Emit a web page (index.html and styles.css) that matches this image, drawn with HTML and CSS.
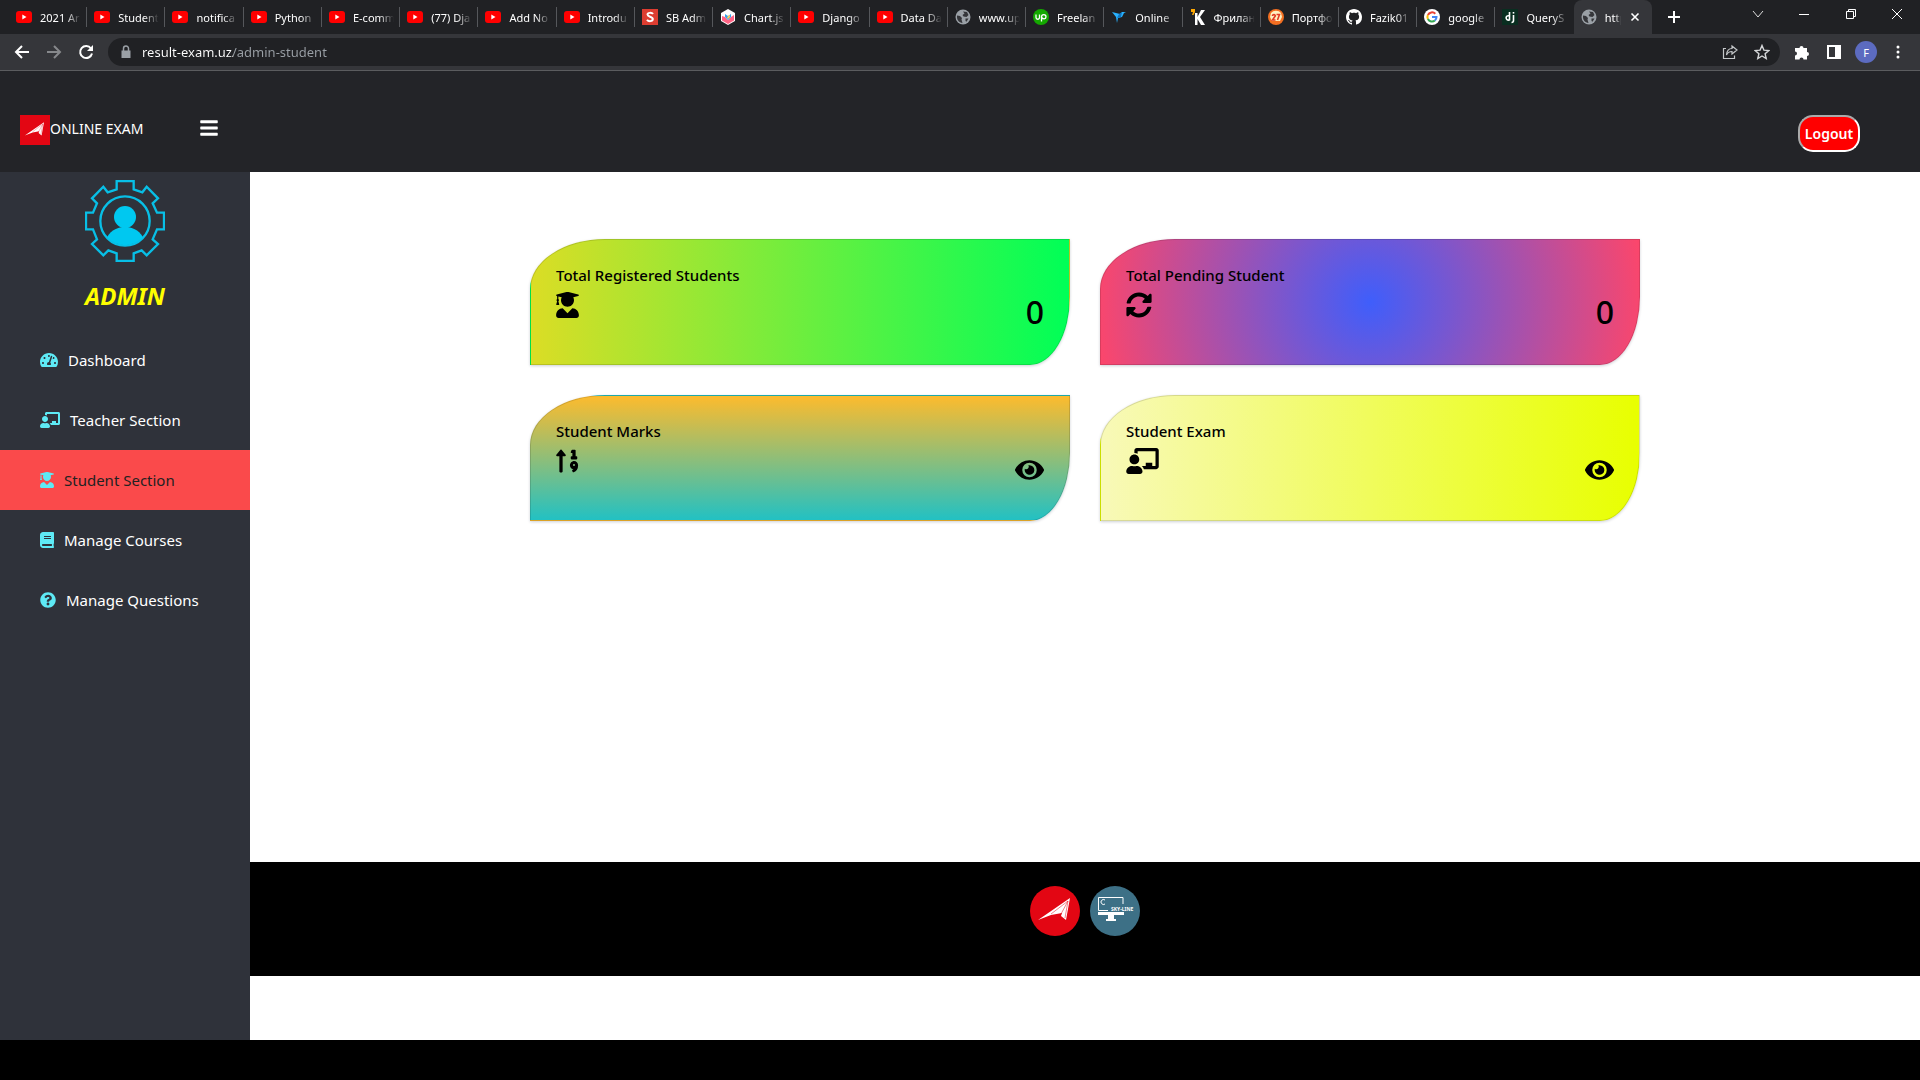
FILE: index.html
```html
<!DOCTYPE html>
<html lang="en">
<head>
<meta charset="utf-8">
<title>Online Exam</title>
<link rel="stylesheet" href="styles.css">
</head>
<body>
<svg class="defs" aria-hidden="true">
  <symbol id="youtube" viewBox="0 0 16 16"><rect y="2" width="16" height="12" rx="3" fill="#f00"/><path d="M6.300 5.500v5L10.500 8z" fill="#fff"/></symbol>
  <symbol id="globe" viewBox="0 0 16 16"><circle cx="8" cy="8" r="7.500" fill="#9aa0a6"/><path d="M2 6.500l3 .5 2 2-.5 1.500 1 3.500C4 13.500 2 11 2 8zM8 2.500l4 .5 1.500 3-2 2-3-.5-1-1.500 2-1.500zM10.500 9.500l3 0-2 3.300-1-.8z" fill="#35363a"/></symbol>
  <symbol id="plane" viewBox="0 0 50 50"><path d="M8 34L40 12 36 34 31 30 32 27 21 29z" fill="#fff"/><path d="M21 28L38 15 31 28M38 15L35 32" fill="none" stroke="#e30613" stroke-width=".5"/></symbol>
  <symbol id="teacher" viewBox="0 0 640 512"><path d="M208 352c-2.390 0-4.780.35-7.060 1.090C187.980 357.300 174.350 360 160 360c-14.350 0-27.980-2.700-40.950-6.910-2.280-.74-4.660-1.090-7.050-1.090C49.940 352-.33 402.480 0 464.620.14 490.880 21.730 512 48 512h224c26.270 0 47.860-21.120 48-47.380.33-62.140-49.940-112.620-112-112.620zm-48-32c53.020 0 96-42.980 96-96s-42.980-96-96-96-96 42.980-96 96 42.980 96 96 96zM592 0H208c-26.470 0-48 22.250-48 49.590V96c23.420 0 45.100 6.780 64 17.800V64h352v288h-64v-64H384v64h-76.240c19.100 16.690 33.120 38.730 39.690 64H592c26.470 0 48-22.250 48-49.590V49.590C640 22.250 618.470 0 592 0z"/></symbol>
  <symbol id="student" viewBox="0 0 448 512"><path d="M319.400 320.600L224 416l-95.400-95.400C57.100 323.700 0 382.200 0 454.400v9.600c0 26.500 21.500 48 48 48h352c26.500 0 48-21.500 48-48v-9.600c0-72.200-57.100-130.700-128.600-133.800zM13.600 79.800l6.400 1.500v58.400c-7 4.200-12 11.500-12 20.300 0 8.400 4.600 15.400 11.100 19.700L3.500 242c-1.700 6.900 2.100 14 7.600 14h41.800c5.500 0 9.300-7.100 7.600-14l-15.600-62.300C51.400 175.400 56 168.400 56 160c0-8.800-5-16.100-12-20.300V87.100l66 15.900c-8.600 17.200-14 36.400-14 57 0 70.700 57.300 128 128 128s128-57.300 128-128c0-20.600-5.300-39.800-14-57l96.300-23.200c18.200-4.400 18.200-27.100 0-31.500l-190.400-46c-13-3.100-26.700-3.100-39.700 0L13.600 48.200c-18.100 4.400-18.100 27.200 0 31.600z"/></symbol>
  <symbol id="eye" viewBox="0 0 576 512"><path d="M572.520 241.400C518.290 135.590 410.930 64 288 64S57.680 135.640 3.480 241.410a32.350 32.350 0 0 0 0 29.190C57.710 376.410 165.070 448 288 448s230.320-71.640 284.520-177.410a32.350 32.350 0 0 0 0-29.190zM288 400a144 144 0 1 1 144-144 143.930 143.930 0 0 1-144 144zm0-240a95.310 95.310 0 0 0-25.310 3.790 47.850 47.850 0 0 1-66.900 66.900A95.780 95.780 0 1 0 288 160z"/></symbol>
</svg>

<div class="browser">
  <div class="tabstrip">
    <div class="tabs" role="tablist">
      <button class="tab" role="tab"><svg><use href="#youtube"/></svg><span>2021 Ar</span></button>
      <button class="tab" role="tab"><svg><use href="#youtube"/></svg><span>Student</span></button>
      <button class="tab" role="tab"><svg><use href="#youtube"/></svg><span>notifica</span></button>
      <button class="tab" role="tab"><svg><use href="#youtube"/></svg><span>Python</span></button>
      <button class="tab" role="tab"><svg><use href="#youtube"/></svg><span>E-comm</span></button>
      <button class="tab" role="tab"><svg><use href="#youtube"/></svg><span>(77) Dja</span></button>
      <button class="tab" role="tab"><svg><use href="#youtube"/></svg><span>Add No</span></button>
      <button class="tab" role="tab"><svg><use href="#youtube"/></svg><span>Introdu</span></button>
      <button class="tab" role="tab"><svg viewBox="0 0 16 16"><path d="M0 0h16v16H0z" fill="#dd3d31"/><path d="M11 5C10 3.500 5.500 3.300 5.500 5.600c0 2.600 5.300 1.700 5.300 4.500 0 2.700-4.600 2.500-5.800.6" fill="none" stroke="#fff" stroke-width="2"/></svg><span>SB Adm</span></button>
      <button class="tab" role="tab"><svg viewBox="0 0 16 16"><path d="M8 0l7 4v8l-7 4-7-4V4z" fill="#fff"/><path d="M2 7l3 1 3 3 3-3 3-2v5.500L8 15l-6-3.500z" fill="#ff6384"/><path d="M5 5l3 2 3-2v3l-3 3-3-3z" fill="#36a2eb"/><path d="M8 7l2-1v2l-2 2-1-1z" fill="#ffce56"/></svg><span>Chart.js</span></button>
      <button class="tab" role="tab"><svg><use href="#youtube"/></svg><span>Django</span></button>
      <button class="tab" role="tab"><svg><use href="#youtube"/></svg><span>Data Da</span></button>
      <button class="tab" role="tab"><svg><use href="#globe"/></svg><span>www.up</span></button>
      <button class="tab" role="tab"><svg viewBox="0 0 16 16"><circle cx="8" cy="8" r="8" fill="#14a800"/><path d="M3 5.500v3c0 2.300 3.500 2.300 3.500 0v-3M8.500 12.500V8c0-3.200 4.500-3 4.500-.2 0 2.600-3.500 2.700-4.500.2" fill="none" stroke="#fff" stroke-width="1.300"/></svg><span>Freelan</span></button>
      <button class="tab" role="tab"><svg viewBox="0 0 16 16"><path d="M1 3l8 2 2-2 4 0-2 1-2 4-4 1-1 5-1-6z" fill="#29b2fe"/><path d="M8 5l3-2-1 5-4 1z" fill="#0e75c2"/></svg><span>Online</span></button>
      <button class="tab" role="tab"><svg viewBox="0 0 16 16"><path d="M1 0h4v3L3.500 6H2l1-3H1z" fill="#ffa800"/><path d="M5 4h2.500v4L11 1h4l-5 7 5 8h-4L7.500 10v6H5z" fill="#fff"/></svg><span>Фрилан</span></button>
      <button class="tab" role="tab"><svg viewBox="0 0 16 16"><circle cx="8" cy="8" r="8" fill="#f36f21"/><path d="M3 4a6 5 0 0 1 10 0l1 4-2 4H4L2 8z" fill="#fff0c0"/><path d="M4.500 7c0-2 3-1.600 2.800 0L4.500 11h3M8.500 5.500h3L9.500 11" fill="none" stroke="#e23b24" stroke-width="1.600"/></svg><span>Портфо</span></button>
      <button class="tab" role="tab"><svg viewBox="0 0 16 16"><path fill="#fff" d="M8 0C3.580 0 0 3.580 0 8c0 3.540 2.290 6.530 5.470 7.590.4.07.55-.17.55-.38 0-.19-.01-.82-.01-1.490-2.010.37-2.530-.49-2.690-.94-.09-.23-.48-.94-.82-1.130-.28-.15-.68-.52-.01-.53.63-.01 1.080.58 1.230.82.72 1.210 1.870.87 2.330.66.07-.52.28-.87.51-1.070-1.780-.2-3.640-.89-3.640-3.950 0-.87.31-1.590.82-2.150-.08-.2-.36-1.020.08-2.120 0 0 .67-.21 2.200.82.640-.18 1.320-.27 2-.27s1.360.09 2 .27c1.530-1.040 2.200-.82 2.200-.82.44 1.100.16 1.920.08 2.120.51.56.82 1.270.82 2.150 0 3.070-1.870 3.750-3.650 3.950.29.25.54.73.54 1.480 0 1.070-.01 1.930-.01 2.200 0 .21.15.46.55.38A8.010 8.010 0 0 0 16 8c0-4.420-3.580-8-8-8z"/></svg><span>Fazik01</span></button>
      <button class="tab" role="tab"><svg viewBox="0 0 16 16"><circle cx="8" cy="8" r="8" fill="#fff"/><g fill="none" stroke-width="2"><path d="M11.300 4.700A4.600 4.600 0 0 0 3.900 6" stroke="#ea4335"/><path d="M3.900 6a4.600 4.600 0 0 0 0 4" stroke="#fbbc05"/><path d="M3.900 10a4.600 4.600 0 0 0 7 1.500" stroke="#34a853"/><path d="M10.900 11.500A4.600 4.600 0 0 0 12.500 8H8" stroke="#4285f4"/></g></svg><span>google</span></button>
      <button class="tab tab-last" role="tab"><svg viewBox="0 0 16 16"><path d="M0 0h16v16H0z" fill="#092e20"/><path d="M7.500 3v8.500M7.500 7C3 5.500 3 12 7.500 11M11.500 6v5.500q0 2-2 2" fill="none" stroke="#fff" stroke-width="1.600"/><path d="M10.700 3h1.600v1.600h-1.600z" fill="#fff"/></svg><span>QueryS</span></button>
      <button class="tab tab-active" role="tab" aria-selected="true"><svg><use href="#globe"/></svg><span>http</span><svg class="close" viewBox="0 0 10 10"><path d="M1.500 1.500l7 7m0-7l-7 7" stroke="#fff" stroke-width="1.600"/></svg></button>
    </div>
    <button class="new-tab" aria-label="New tab"><svg viewBox="0 0 14 14"><path d="M7 1v12M1 7h12" stroke="#fff" stroke-width="2"/></svg></button>
    <div class="window-controls">
      <button aria-label="Search tabs"><svg viewBox="0 0 12 12"><path d="M1 3l5 6 5-6" fill="none" stroke="#ddd"/></svg></button>
      <button aria-label="Minimize"><svg viewBox="0 0 12 12"><path d="M1 6.500h10" stroke="#fff"/></svg></button>
      <button aria-label="Restore"><svg viewBox="0 0 12 12"><path d="M1.500 3.500h7v7h-7zM3.500 3.500v-2h7v7h-2" fill="none" stroke="#fff"/></svg></button>
      <button aria-label="Close"><svg viewBox="0 0 12 12"><path d="M1 1l10 10m0-10L1 11" stroke="#fff"/></svg></button>
    </div>
  </div>
  <div class="toolbar">
    <button aria-label="Back"><svg viewBox="0 0 16 16"><path d="M15 8H2m6-6L2 8l6 6" fill="none" stroke="#fff" stroke-width="2"/></svg></button>
    <button aria-label="Forward"><svg viewBox="0 0 16 16"><path d="M1 8h13M8 2l6 6-6 6" fill="none" stroke="#86888b" stroke-width="2"/></svg></button>
    <button aria-label="Reload"><svg viewBox="0 0 16 16"><path d="M13 4.500A6 6 0 1 0 14 9.500" fill="none" stroke="#fff" stroke-width="2"/><path d="M15 1v6H9z" fill="#fff"/></svg></button>
    <div class="address">
      <svg viewBox="0 0 16 16"><path d="M3.500 6.500h9V14h-9z" fill="#9aa0a6"/><path d="M5.500 7V4.500a2.500 2.500 0 0 1 5 0V7" fill="none" stroke="#9aa0a6" stroke-width="1.500"/></svg>
      <input type="text" aria-label="Address" value="result-exam.uz/admin-student">
      <button aria-label="Share"><svg viewBox="0 0 16 16"><path d="M4 4.500H1.500v10h11v-3M10 2l5 4-5 4V7.500Q6 7.500 4.500 11 5 4.500 10 4.500z" fill="none" stroke="#c4c7c9" stroke-width="1.200"/></svg></button>
      <button aria-label="Bookmark"><svg viewBox="0 0 16 16"><path d="M8 1.500l1.900 4.600 4.900.4-3.700 3.200 1.100 4.800L8 12l-4.200 2.500 1.100-4.800L1.200 6.500l4.900-.4z" fill="none" stroke="#d4d6d8" stroke-width="1.400"/></svg></button>
    </div>
    <button aria-label="Extensions"><svg viewBox="0 0 16 16"><path d="M1 4h4.500a2 2 0 1 1 4 0H13v4a2 2 0 1 1 0 4v3.500H9.500a2 2 0 1 0-4 0H1v-4a2 2 0 1 0 0-4z" fill="#fff"/></svg></button>
    <button aria-label="Side panel"><svg viewBox="0 0 16 16"><path d="M2 2h12v12H2z" fill="none" stroke="#fff" stroke-width="2"/><path d="M9 2h5v12H9z" fill="#fff"/></svg></button>
    <button class="avatar" aria-label="Profile">F</button>
    <button aria-label="Menu"><svg viewBox="0 0 16 16"><g fill="#fff"><circle cx="8" cy="3" r="1.500"/><circle cx="8" cy="8" r="1.500"/><circle cx="8" cy="13" r="1.500"/></g></svg></button>
  </div>
</div>

<header class="topbar">
  <a class="brand" href="#"><svg viewBox="0 0 50 50"><use href="#plane"/></svg><span>ONLINE EXAM</span></a>
  <button class="menu-toggle" aria-label="Toggle menu"><svg viewBox="0 0 448 512"><path d="M16 132h416c9 0 16-7 16-16V76c0-9-7-16-16-16H16C7 60 0 67 0 76v40c0 9 7 16 16 16zm0 160h416c9 0 16-7 16-16v-40c0-9-7-16-16-16H16c-9 0-16 7-16 16v40c0 9 7 16 16 16zm0 160h416c9 0 16-7 16-16v-40c0-9-7-16-16-16H16c-9 0-16 7-16 16v40c0 9 7 16 16 16z" fill="#fff"/></svg></button>
  <button class="logout">Logout</button>
</header>

<div class="layout">
  <aside class="sidebar">
    <div class="profile">
      <svg viewBox="0 0 240 246"><path d="M95 28V3h51v25l26 9 13-17 34 35-16 15 13 28h21v50h-21l-13 30 16 14-34 34-15-15-24 9v23H95v-23l-25-9-15 15-34-34 15-14-12-30H3V98h21l12-28-15-15 34-35 13 17z" fill="none" stroke="#08bfe6" stroke-width="7"/><circle cx="120" cy="123" r="74" fill="none" stroke="#08bfe6" stroke-width="7"/><circle cx="120" cy="111" r="33" fill="#00c8f0"/><path d="M66 172c14-24 34-31 54-31s40 7 54 31a74 74 0 0 1-108 0z" fill="#00c8f0"/></svg>
      <h2>ADMIN</h2>
    </div>
    <nav>
      <a href="#"><svg class="w18" viewBox="0 0 576 512"><path d="M288 32C128.940 32 0 160.940 0 320c0 52.800 14.250 102.260 39.060 144.800 5.610 9.620 16.300 15.200 27.440 15.200h443c11.140 0 21.830-5.580 27.440-15.200C561.750 422.260 576 372.800 576 320c0-159.060-128.940-288-288-288zm0 64c14.710 0 26.580 10.130 30.320 23.650-1.110 2.260-2.640 4.230-3.450 6.670l-9.220 27.670c-5.130 3.490-10.970 6.010-17.640 6.010-17.670 0-32-14.330-32-32S270.330 96 288 96zM96 384c-17.670 0-32-14.330-32-32s14.330-32 32-32 32 14.330 32 32-14.330 32-32 32zm48-160c-17.670 0-32-14.330-32-32s14.330-32 32-32 32 14.330 32 32-14.330 32-32 32zm246.770-72.410l-61.330 184C343.130 347.330 352 364.540 352 384c0 11.720-3.380 22.550-8.880 32H232.880c-5.500-9.450-8.880-20.280-8.880-32 0-33.940 26.500-61.430 59.900-63.590l61.340-184.010c4.170-12.560 17.730-19.450 30.360-15.170 12.570 4.190 19.350 17.790 15.170 30.360zm14.660 57.200l15.520-46.550c3.470-1.290 7.130-2.230 11.050-2.230 17.670 0 32 14.330 32 32s-14.330 32-32 32c-11.380-.01-20.890-6.280-26.570-15.220zM480 384c-17.670 0-32-14.330-32-32s14.330-32 32-32 32 14.330 32 32-14.330 32-32 32z"/></svg>Dashboard</a>
      <a href="#"><svg class="w20"><use href="#teacher"/></svg>Teacher Section</a>
      <a href="#" class="current" aria-current="page"><svg class="w14"><use href="#student"/></svg>Student Section</a>
      <a href="#"><svg class="w14" viewBox="0 0 448 512"><path d="M448 360V24c0-13.300-10.700-24-24-24H96C43 0 0 43 0 96v320c0 53 43 96 96 96h328c13.300 0 24-10.700 24-24v-16c0-7.500-3.500-14.300-8.900-18.700-4.200-15.400-4.200-59.300 0-74.700 5.400-4.300 8.900-11.100 8.900-18.600zM128 134c0-3.300 2.700-6 6-6h212c3.300 0 6 2.700 6 6v20c0 3.300-2.700 6-6 6H134c-3.300 0-6-2.700-6-6v-20zm0 64c0-3.300 2.700-6 6-6h212c3.300 0 6 2.700 6 6v20c0 3.300-2.700 6-6 6H134c-3.300 0-6-2.700-6-6v-20zm253.400 250H96c-17.700 0-32-14.300-32-32 0-17.600 14.400-32 32-32h285.400c-1.900 17.100-1.900 46.900 0 64z"/></svg>Manage Courses</a>
      <a href="#"><svg class="w16" viewBox="0 0 512 512"><path d="M504 256c0 136.997-111.043 248-248 248S8 392.997 8 256C8 119.083 119.043 8 256 8s248 111.083 248 248zM262.655 90c-54.497 0-89.255 22.957-116.549 63.758-3.536 5.286-2.353 12.415 2.715 16.258l34.699 26.310c5.205 3.947 12.621 3.008 16.665-2.122 17.864-22.658 30.113-35.797 57.303-35.797 20.429 0 45.698 13.148 45.698 32.958 0 14.976-12.363 22.667-32.534 33.976C247.128 238.528 216 254.941 216 296v4c0 6.627 5.373 12 12 12h56c6.627 0 12-5.373 12-12v-1.333c0-28.462 83.186-29.647 83.186-106.667 0-58.002-60.165-102-116.531-102zM256 338c-25.365 0-46 20.635-46 46 0 25.364 20.635 46 46 46s46-20.636 46-46c0-25.365-20.635-46-46-46z"/></svg>Manage Questions</a>
    </nav>
  </aside>

  <main>
    <section class="cards">
      <article class="card registered">
        <h3>Total Registered Students</h3>
        <div class="card-row"><svg class="w23"><use href="#student"/></svg><span class="value">0</span></div>
      </article>
      <article class="card pending">
        <h3>Total Pending Student</h3>
        <div class="card-row"><svg class="w26" viewBox="0 0 512 512"><path d="M370.720 133.280C339.458 104.008 298.888 87.962 255.848 88c-77.458.068-144.328 53.178-162.791 126.850-1.344 5.363-6.122 9.150-11.651 9.150H24.103c-7.498 0-13.194-6.807-11.807-14.176C33.933 94.924 134.813 8 256 8c66.448 0 126.791 26.136 171.315 68.685L463.030 40.970C478.149 25.851 504 36.559 504 57.941V192c0 13.255-10.745 24-24 24H345.941c-21.382 0-32.090-25.851-16.971-40.971l41.750-41.749zM32 296h134.059c21.382 0 32.090 25.851 16.971 40.971l-41.750 41.750c31.262 29.273 71.835 45.319 114.876 45.280 77.418-.07 144.315-53.144 162.787-126.849 1.344-5.363 6.122-9.150 11.651-9.150h57.304c7.498 0 13.194 6.807 11.807 14.176C478.067 417.076 377.187 504 256 504c-66.448 0-126.791-26.136-171.315-68.685L48.970 471.030C33.851 486.149 8 475.441 8 454.059V320c0-13.255 10.745-24 24-24z"/></svg><span class="value">0</span></div>
      </article>
      <article class="card marks">
        <h3>Student Marks</h3>
        <div class="card-row"><svg class="w23" viewBox="0 0 448 512"><path d="M16 160h48v304a16 16 0 0 0 16 16h32a16 16 0 0 0 16-16V160h48c14.210 0 21.380-17.240 11.310-27.310l-80-96a16 16 0 0 0-22.620 0l-80 96C-5.350 142.740 1.780 160 16 160z"/><path d="M304 96h16v64h-16a16 16 0 0 0-16 16v32a16 16 0 0 0 16 16h96a16 16 0 0 0 16-16v-32a16 16 0 0 0-16-16h-16V48a16 16 0 0 0-16-16h-48a16 16 0 0 0-14.290 8.830l-16 32A16 16 0 0 0 304 96zm26.150 162.910a79 79 0 0 0-55 54.170c-14.250 51.050 21.210 97.770 68.850 102.530a84.070 84.070 0 0 1-20.850 12.910c-7.570 3.400-10.800 12.470-8.180 20.340l9.900 20c2.870 8.630 12.530 13.490 20.900 9.910 58-24.760 86.250-61.610 86.250-132V336c-.02-51.210-48.400-91.340-101.850-77.090zM352 356a20 20 0 1 1 20-20 20 20 0 0 1-20 20z"/></svg><a class="value" href="#" aria-label="View student marks"><svg class="w29"><use href="#eye"/></svg></a></div>
      </article>
      <article class="card exam">
        <h3>Student Exam</h3>
        <div class="card-row"><svg class="w33"><use href="#teacher"/></svg><a class="value" href="#" aria-label="View student exam"><svg class="w29"><use href="#eye"/></svg></a></div>
      </article>
    </section>
    <footer>
      <a class="social social-plane" href="#" aria-label="Online Exam"><svg viewBox="0 0 50 50"><use href="#plane"/></svg></a>
      <a class="social social-sky" href="#" aria-label="Sky-Line"><svg viewBox="0 0 50 50"><path d="M18 24.500H8.500v-13H33V18" fill="none" stroke="#fff"/><path d="M8 26h26v3H8zM18 29h6v4h2v2H16v-2h2z" fill="#fff"/><path d="M15 14a2.500 2.500 0 1 0 0 4" fill="none" stroke="#fff"/><text x="21" y="25">SKY-LINE</text></svg></a>
    </footer>
  </main>
</div>
<div class="taskbar"></div>
</body>
</html>
```

FILE: styles.css
```css
* { box-sizing: border-box; }

body {
  margin: 0;
  min-height: 100vh;
  display: flex;
  flex-direction: column;
  background: #fff;
  color: #000;
  font-family: "Noto Sans", "Open Sans", sans-serif;
  font-size: 15px;
}

button {
  padding: 0;
  border: 0;
  background: none;
  color: inherit;
  font: inherit;
}

a { color: inherit; text-decoration: none; }
svg { display: block; flex: none; }
.defs { position: absolute; width: 0; height: 0; }

/* Browser window */
.browser { background: #202124; color: #fff; font-size: 11px; }
.tabstrip { display: flex; height: 34px; padding-left: 9px; }
.tabs { display: flex; flex: 1; min-width: 0; }

.tab {
  position: relative;
  display: flex;
  flex: 1 1 0;
  min-width: 0;
  align-items: center;
  gap: 8px;
  padding: 0 4px 0 7px;
}

.tab::after {
  content: "";
  position: absolute;
  right: 0;
  top: 7px;
  width: 1px;
  height: 20px;
  background: #55575b;
}

.tab-last::after, .tab-active::after { display: none; }
.tab svg { width: 16px; height: 16px; }

.tab span {
  flex: 1;
  min-width: 0;
  overflow: hidden;
  text-align: left;
  white-space: pre;
  -webkit-mask-image: linear-gradient(to right, #000 60%, transparent 95%);
  mask-image: linear-gradient(to right, #000 60%, transparent 95%);
}

.tab-active { background: #35363a; border-radius: 8px 8px 0 0; }
.tab .close { width: 10px; height: 10px; margin-right: 8px; }

.new-tab { display: flex; width: 43px; align-items: center; justify-content: center; }
.new-tab svg { width: 14px; height: 14px; }
.window-controls { display: flex; width: 225px; padding: 0 0 6px 40px; }
.window-controls button { display: flex; flex: 1; align-items: center; justify-content: center; }
.window-controls svg { width: 12px; height: 12px; }

.toolbar {
  display: flex;
  align-items: center;
  height: 37px;
  padding: 0 6px;
  background: #35363a;
  border-bottom: 1px solid #5b5c5f;
}

.toolbar button { display: flex; width: 32px; height: 28px; align-items: center; justify-content: center; }
.toolbar svg { width: 16px; height: 16px; }

.address {
  display: flex;
  flex: 1;
  align-items: center;
  height: 28px;
  margin: 0 6px;
  padding: 0 2px 0 10px;
  border-radius: 14px;
  background: #202124;
}

.address input {
  flex: 1;
  height: 20px;
  margin-left: 8px;
  padding: 0;
  border: 0;
  outline: 0;
  font: 13px "Noto Sans", "Open Sans", sans-serif;
  color: transparent;
  background: linear-gradient(to right, #fff 91px, #9aa0a6 91px);
  -webkit-background-clip: text;
  background-clip: text;
}

.toolbar .avatar { width: 22px; height: 22px; margin: 0 5px; border-radius: 50%; background: #5c6bc0; }

/* App header */
.topbar {
  display: flex;
  align-items: flex-start;
  height: 101px;
  padding: 44px 60px 0 20px;
  background: #232428;
  color: #fff;
}

.brand { display: flex; width: 180px; font-size: 14px; line-height: 28px; }
.brand svg { width: 30px; height: 30px; background: #e30613; }
.menu-toggle { padding-top: 3px; }
.menu-toggle svg { width: 18px; height: 20px; }

.logout {
  width: 62px;
  height: 37px;
  margin-left: auto;
  border: 2px solid #fff;
  border-color: #aaa #fff #fff #aaa;
  border-radius: 15px;
  background: #f00;
  font-weight: 600;
  font-size: 14px;
}

/* Sidebar */
.layout { display: flex; flex: 1; }
.sidebar { width: 250px; flex: none; background: #2f323a; color: #fff; }
.profile { display: flex; flex-direction: column; align-items: center; padding-top: 8px; }
.profile svg { width: 80px; height: 82px; }

.profile h2 {
  margin: 18px 0;
  font-size: 24px;
  line-height: 32px;
  font-style: italic;
  font-weight: 700;
  color: #ff0;
}

.sidebar a { display: flex; align-items: center; gap: 10px; height: 60px; padding-left: 40px; }
.sidebar nav svg { height: 16px; fill: #5eeaf5; }
.sidebar .current { background: #fa4a4b; color: #222; }

.w14 { width: 14px; }
.w16 { width: 16px; }
.w18 { width: 18px; }
.w20 { width: 20px; }
.w23 { width: 23px; }
.w26 { width: 26px; }
.w29 { width: 29px; }
.w33 { width: 33px; }

/* Content */
main { display: flex; flex: 1; flex-direction: column; min-width: 0; }

.cards {
  display: grid;
  flex: 1;
  grid-template-columns: 1fr 1fr;
  align-content: start;
  gap: 30px;
  width: 100%;
  max-width: 1110px;
  margin: 0 auto;
  padding: 67px 0;
}

.card {
  padding: 25px 25px 28px;
  border: 1px solid rgba(0, 0, 0, .13);
  border-radius: 75px 0 40px 0 / 50px 0 68px 0;
  box-shadow: 0 1px 3px rgba(4, 26, 55, .2);
}

.card h3 { margin: 0 0 7px; font-size: 15px; line-height: 20px; font-weight: 500; }
.card-row { display: flex; justify-content: space-between; height: 44px; }
.card-row svg { height: 26px; }
.value { display: flex; align-items: center; font-size: 32px; line-height: 40px; font-weight: 500; }
span.value { align-items: flex-start; }

.registered { background: linear-gradient(to right, #dbdd25, #00ff57); }
.pending { background: radial-gradient(circle, #3f5efb, #fc466b); }
.marks { background: linear-gradient(to top, #22c1c3, #fdbb2d); }
.exam { background: linear-gradient(to right, #f8f9b8, #e8ff00); }

footer {
  display: flex;
  justify-content: center;
  gap: 10px;
  margin-bottom: 64px;
  padding: 24px 0 40px;
  background: #000;
}

.social { width: 50px; height: 50px; border-radius: 50%; }
.social-plane { background: #e30613; }
.social-sky { background: #3d7086; }
.social text { fill: #fff; font: 700 5px "Noto Sans", sans-serif; }

.taskbar { height: 40px; background: #000; }
```
